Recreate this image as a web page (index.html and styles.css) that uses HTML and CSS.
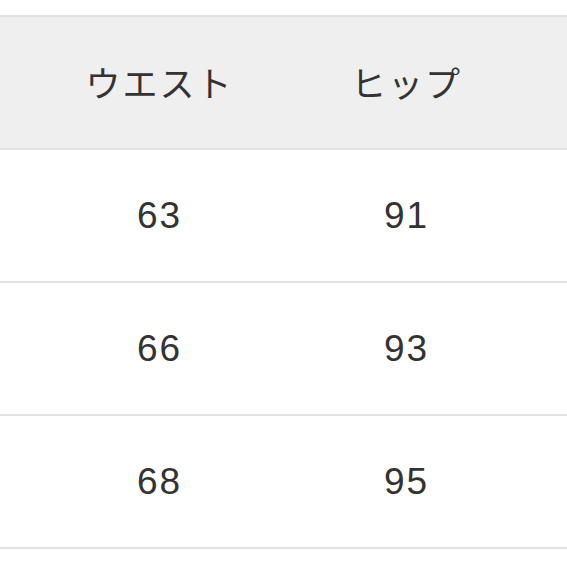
FILE: index.html
```html
<!DOCTYPE html>
<html lang="ja">
<head>
<meta charset="utf-8">
<link rel="stylesheet" href="styles.css">
</head>
<body>
<div class="size-table">
  <div class="row head">
    <div class="cell">ウエスト</div>
    <div class="cell">ヒップ</div>
  </div>
  <div class="row">
    <div class="cell num">63</div>
    <div class="cell num">91</div>
  </div>
  <div class="row">
    <div class="cell num">66</div>
    <div class="cell num">93</div>
  </div>
  <div class="row">
    <div class="cell num">68</div>
    <div class="cell num">95</div>
  </div>
</div>
</body>
</html>
```
FILE: styles.css
```css
html, body {
  margin: 0;
  padding: 0;
  background: #ffffff;
}
body {
  font-family: "Noto Sans CJK JP", "Liberation Sans", sans-serif;
  color: #333333;
}
.size-table {
  margin-top: 15px;
  border-top: 2px solid #e2e2e2;
}
.row {
  display: grid;
  grid-template-columns: 247px 247px;
  padding-left: 36px;
  height: 131px;
  border-bottom: 2px solid #e2e2e2;
}
.row.head {
  background: #efefef;
}
.cell {
  display: flex;
  align-items: center;
  justify-content: center;
  font-size: 35px;
  font-weight: 400;
  letter-spacing: 2px;
  padding-bottom: 2px;
}
.cell.num {
  font-family: "Liberation Sans", "Noto Sans", sans-serif;
  font-size: 37px;
  letter-spacing: 2px;
  padding-bottom: 0;
}
```
